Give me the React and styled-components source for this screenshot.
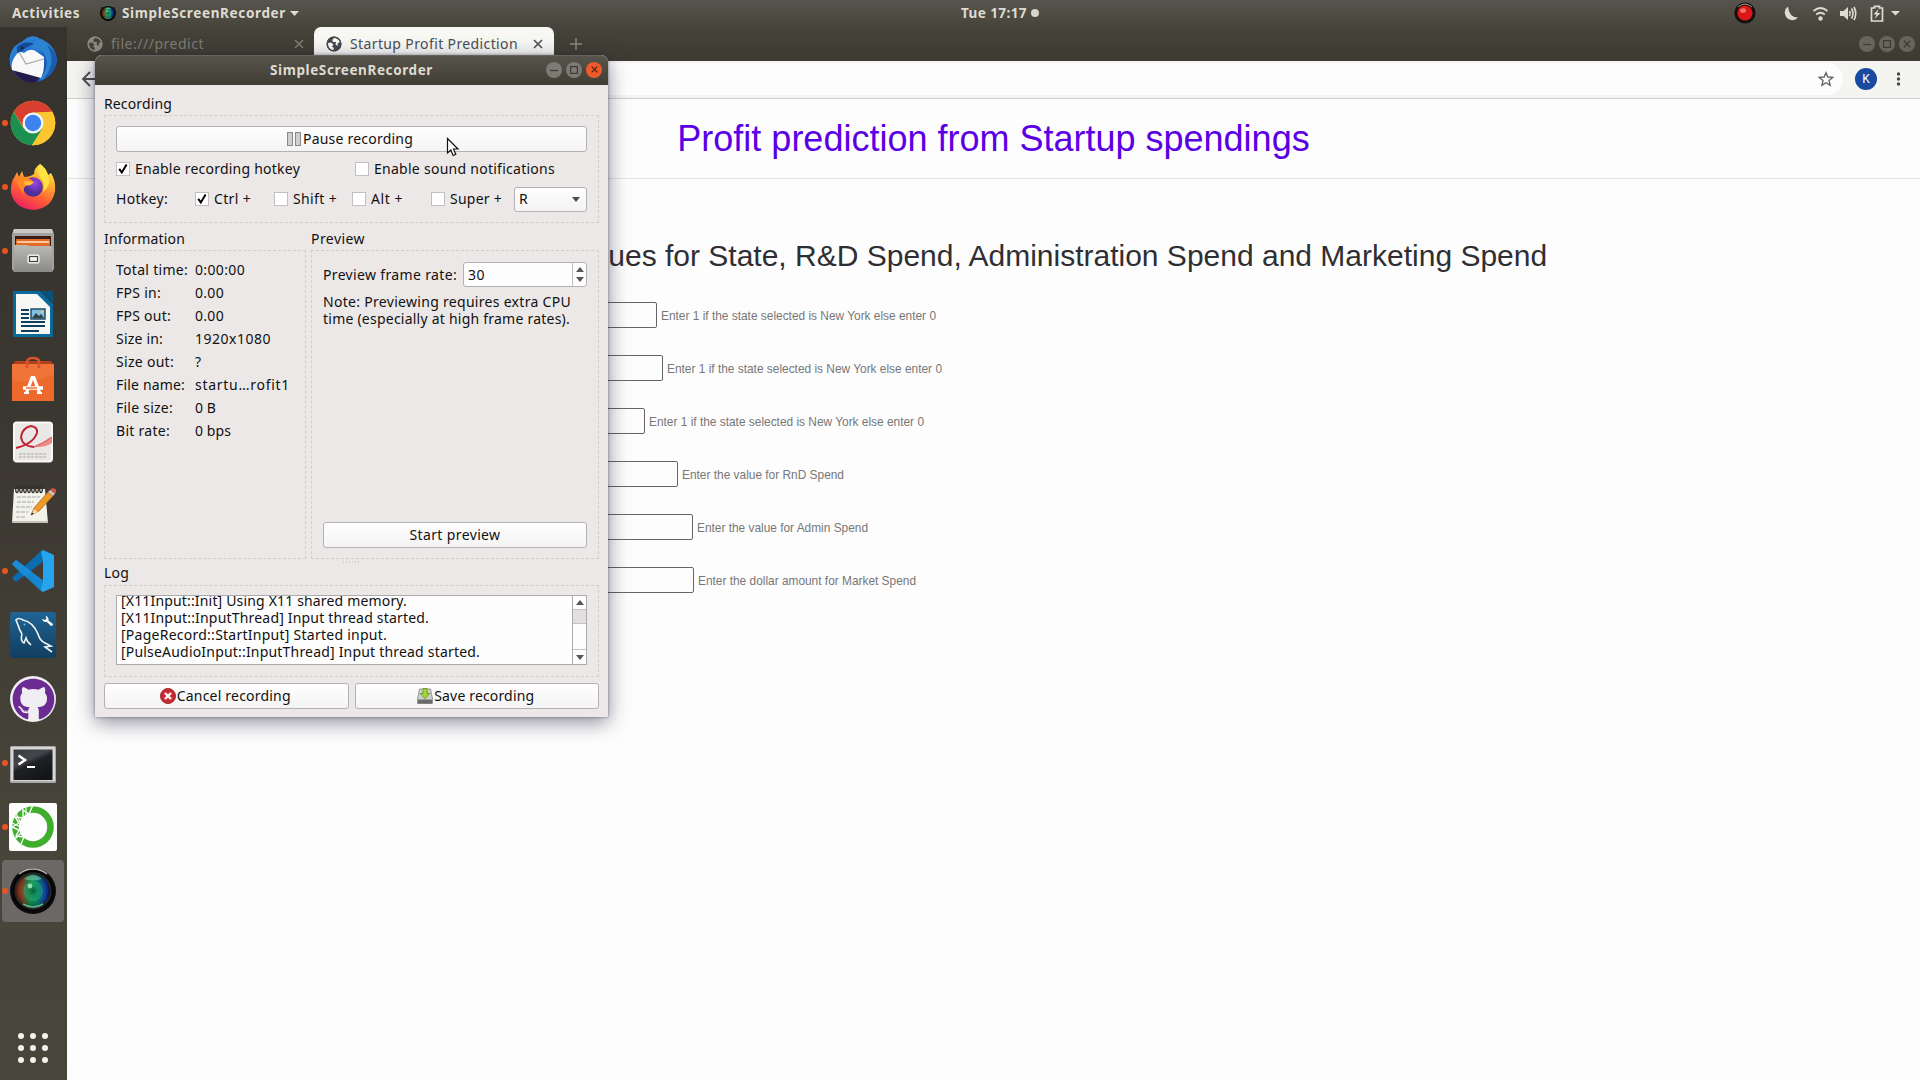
import React, { useLayoutEffect, useRef } from "react";
import styled, { createGlobalStyle, css } from "styled-components";
import { FaGithub } from "react-icons/fa";

const UI = `"Noto Sans", "Open Sans", sans-serif`;
const WEB = `"Liberation Sans", Arial, sans-serif`;

const GlobalStyle = createGlobalStyle`
  * { box-sizing: border-box; }
  body { margin: 0; background: #fdfdfd; overflow: hidden; }
  svg { display: block; flex: none; }
`;

/* ---------- text that tracks out to a given width ---------- */
const TextSpan = styled.span`
  display: inline-block;
  flex: none;
  white-space: pre;
  margin-left: ${(p) => p.$ml || 0}px;
`;
function Label({ w, ml, children }) {
  const ref = useRef(null);
  useLayoutEffect(() => {
    const el = ref.current;
    el.style.letterSpacing = "0px";
    const natural = el.getBoundingClientRect().width;
    el.style.letterSpacing = `${(w - natural) / el.textContent.length}px`;
  }, [w]);
  return <TextSpan ref={ref} $ml={ml}>{children}</TextSpan>;
}

/* ---------- shell ---------- */
const Desktop = styled.div`
  position: relative;
  width: 1920px;
  height: 1080px;
  display: flex;
  flex-direction: column;
  overflow: hidden;
  background: #fdfdfd;
  font-family: ${UI};
  font-size: 14px;
  line-height: 18px;
  color: #111;
`;
const TopBar = styled.header`
  height: 27px;
  flex: none;
  display: flex;
  align-items: center;
  padding: 0 0 1px 12px;
  background: linear-gradient(#56544c, #47453b);
  color: #dfdbd2;
  font-weight: 700;
  font-size: 13.5px;
`;
const AppMenu = styled.div`
  display: flex;
  align-items: center;
  margin-left: 20px;
  width: 848px;
`;
const Clock = styled.div`
  display: flex;
  align-items: center;
  gap: 4px;
  margin-left: 13px;
`;
const ClockDot = styled.i`
  width: 8px;
  height: 8px;
  border-radius: 50%;
  background: #d8d5cd;
`;
const Tray = styled.div`
  display: flex;
  align-items: center;
  margin-left: auto;
  padding-right: 20px;
`;
const Body = styled.div`
  flex: 1;
  display: flex;
  min-height: 0;
`;

/* ---------- dock ---------- */
const Dock = styled.nav`
  width: 67px;
  flex: none;
  display: flex;
  flex-direction: column;
  background: linear-gradient(#36322d, #3a3630 35%, #47443a 75%, #48453b);
`;
const DockItem = styled.div`
  height: 64px;
  display: flex;
  align-items: center;
  padding-left: 2px;
`;
const DockTile = styled.div`
  width: 62px;
  height: 62px;
  border-radius: 4px;
  display: flex;
  align-items: center;
  background: ${(p) => (p.$on ? "#6b6865" : "transparent")};
`;
const RunDot = styled.i`
  width: 6px;
  height: 6px;
  border-radius: 50%;
  margin-right: 1px;
  background: ${(p) => (p.$run ? "#e95420" : "transparent")};
`;
const IconSlot = styled.span`
  width: 48px;
  display: flex;
  justify-content: center;
  padding: ${(p) => p.$pad || "0"};
`;
const AppsGrid = styled.div`
  margin: auto 0 17px 18px;
  display: grid;
  grid-template-columns: repeat(3, 6px);
  gap: 6px;
`;
const AppsDot = styled.i`
  width: 6px;
  height: 6px;
  border-radius: 50%;
  background: #f3f2ee;
`;

/* ---------- browser ---------- */
const Browser = styled.main`
  flex: 1;
  min-width: 0;
  display: flex;
  flex-direction: column;
`;
const TabStrip = styled.div`
  height: 34px;
  flex: none;
  display: flex;
  background: linear-gradient(#46443a, #3d3b31);
  font-size: 14px;
`;
const Tab = styled.div`
  height: 34px;
  width: ${(p) => p.$w}px;
  padding: 0 ${(p) => (p.$active ? 11 : 10)}px 0 ${(p) => (p.$active ? 12 : 20)}px;
  display: flex;
  align-items: center;
  border-radius: 7px 7px 0 0;
  color: ${(p) => (p.$active ? "#4b4d51" : "#7f7d75")};
  ${(p) => p.$active && css`background: #f7f7f4;`}
`;
const TabClose = styled.span`
  margin-left: auto;
`;
const NewTab = styled.div`
  width: 44px;
  display: flex;
  align-items: center;
  justify-content: center;
`;
const WindowButtons = styled.div`
  display: flex;
  align-items: center;
  gap: 4px;
  margin-left: auto;
  padding-right: ${(p) => p.$pr}px;
`;
const RoundButton = styled.span`
  width: 16px;
  height: 16px;
  border-radius: 50%;
  display: flex;
  align-items: center;
  justify-content: center;
  background: ${(p) => p.$bg};
  color: ${(p) => p.$fg};
`;
const Toolbar = styled.div`
  height: 38px;
  flex: none;
  display: flex;
  align-items: center;
  padding: 0 0 2px 14px;
  border-bottom: 1px solid #cfcfcf;
  background: #f4f4f1;
`;
const Omnibox = styled.div`
  width: 1680px;
  height: 32px;
  flex: none;
  margin-left: 66px;
  border-radius: 16px;
  background: #fdfdfd;
  display: flex;
  align-items: center;
  justify-content: flex-end;
  padding-right: 9px;
`;
const Avatar = styled.div`
  width: 22px;
  height: 22px;
  margin-left: 12px;
  flex: none;
  border-radius: 50%;
  background: #1a49a0;
  color: #fff;
  font: 12px/22px Roboto, sans-serif;
  text-align: center;
`;
const PageHeader = styled.div`
  height: 80px;
  flex: none;
  border-bottom: 1px solid #e5e5e5;
  text-align: center;
  font: 36px/80px ${WEB};
  color: #5a00e6;
`;
const PageTitle = styled.h1`
  margin: 0;
  font: inherit;
`;
const Lead = styled.h2`
  margin: 60px 0 0;
  text-align: center;
  font: 30px/33px ${WEB};
  color: #2f2f33;
`;
const Form = styled.form`
  display: flex;
  flex-direction: column;
  gap: 27px;
  margin: 30px 0 0 373px;
`;
const Field = styled.div`
  display: flex;
  align-items: center;
  gap: 4px;
  height: 26px;
  font: 11.9px/17px ${WEB};
  color: #777;
`;
const Hint = styled.span`
  padding-top: 2px;
`;
const Input = styled.div`
  width: ${(p) => p.$w}px;
  height: 26px;
  border: 1px solid #66646b;
  border-radius: 2px;
  background: #fdfdfd;
`;

/* ---------- recorder window ---------- */
const Window = styled.section`
  position: absolute;
  left: 95px;
  top: 55px;
  width: 513px;
  height: 662px;
  display: flex;
  flex-direction: column;
  border-radius: 7px 7px 0 0;
  background: #ece8e7;
  box-shadow: 0 5px 20px rgba(30, 28, 60, 0.52), 0 0 3px rgba(40, 38, 60, 0.5);
`;
const TitleBar = styled.div`
  height: 30px;
  flex: none;
  display: flex;
  align-items: center;
  padding: 0 0 2px 175px;
  border-radius: 7px 7px 0 0;
  background: linear-gradient(#56544b, #3f3d34);
  border-top: 1px solid #66645b;
  color: #dfdbd2;
  font-weight: 700;
  font-size: 13.5px;
`;
const Content = styled.div`
  flex: 1;
  padding: 10px 9px 9px;
  display: flex;
  flex-direction: column;
`;
const GroupTitle = styled.div`
  height: ${(p) => p.$h}px;
  line-height: 18px;
`;
const Group = styled.div`
  border: 1px dashed #d2cecf;
  display: flex;
  flex-direction: column;
  height: ${(p) => p.$h}px;
  padding: ${(p) => p.$pad};
`;
const Button = styled.div`
  height: 26px;
  flex: ${(p) => (p.$grow ? 1 : "none")};
  display: flex;
  align-items: center;
  justify-content: center;
  gap: 1px;
  padding-right: ${(p) => p.$pr || 0}px;
  border: 1px solid #b5b1b3;
  border-radius: 3px;
  background: linear-gradient(#fefefe, #f5f4f4);
`;
const Line = styled.div`
  display: flex;
  align-items: center;
  height: ${(p) => p.$h}px;
  margin-top: ${(p) => p.$mt || 0}px;
`;
const Box = styled.span`
  width: 14px;
  height: 14px;
  flex: none;
  border: 1px solid #c4c0c2;
  background: #fff;
  display: flex;
  align-items: center;
  justify-content: center;
`;
const Check = styled.div`
  display: flex;
  align-items: center;
  width: ${(p) => p.$w}px;
  gap: 5px;
`;
const HotkeyTitle = styled.div`
  width: 79px;
`;
const Combo = styled.div`
  width: 73px;
  height: 25px;
  margin-left: auto;
  padding: 0 6px 0 4px;
  display: flex;
  align-items: center;
  justify-content: space-between;
  border: 1px solid #b5b1b3;
  border-radius: 3px;
  background: linear-gradient(#fefefe, #f5f4f4);
`;
const Split = styled.div`
  display: flex;
  gap: 5px;
  margin-top: 7px;
`;
const Column = styled.div`
  width: ${(p) => p.$w}px;
`;
const InfoRow = styled.div`
  height: 23px;
  display: grid;
  grid-template-columns: 79px 1fr;
  align-items: center;
`;
const Spin = styled.div`
  width: 124px;
  height: 25px;
  margin-left: auto;
  padding-left: 4px;
  border: 1px solid #b5b1b3;
  border-radius: 3px;
  background: #fdfdfd;
  display: flex;
  align-items: center;
`;
const SpinArrows = styled.div`
  width: 14px;
  height: 23px;
  margin-left: auto;
  border-left: 1px solid #c4c0c2;
  display: flex;
  flex-direction: column;
  align-items: center;
  justify-content: space-evenly;
`;
const Note = styled.div`
  margin: 6px 0 9px;
  height: 220px;
  display: flex;
  flex-direction: column;
  line-height: 17px;
`;
const LogView = styled.div`
  height: 70px;
  border: 1px solid #aeaaac;
  background: #fdfdfd;
  display: flex;
  overflow: hidden;
`;
const LogLines = styled.div`
  flex: 1;
  display: flex;
  flex-direction: column;
  padding-left: 4px;
  margin-top: -4px;
  line-height: 17px;
`;
const Scroll = styled.div`
  width: 14px;
  display: flex;
  flex-direction: column;
  border-left: 1px solid #aeaaac;
`;
const ScrollPart = styled.div`
  height: ${(p) => p.$h}px;
  display: flex;
  align-items: center;
  justify-content: center;
  background: ${(p) => p.$bg || "#fdfdfd"};
  border-bottom: ${(p) => (p.$line ? "1px solid #c3c0c6" : "0")};
`;
const Actions = styled.div`
  display: flex;
  gap: 6px;
  margin-top: 6px;
`;
const Grip = styled.div`
  height: 5px;
  display: flex;
  justify-content: center;
  align-items: center;
`;
const Pointer = styled.div`
  position: absolute;
  left: 446px;
  top: 137px;
`;

/* ---------- small glyphs ---------- */
const Tri = ({ w = 8, h = 5, up, c = "currentColor" }) => (
  <svg width={w} height={h} viewBox="0 0 10 6" preserveAspectRatio="none">
    <path d={up ? "M0 6L5 0L10 6Z" : "M0 0L5 6L10 0Z"} fill={c} />
  </svg>
);
const Cross = ({ s = 10, sw = 1.6 }) => (
  <svg width={s} height={s} viewBox="0 0 10 10">
    <path d="M1 1L9 9M9 1L1 9" stroke="currentColor" strokeWidth={sw} fill="none" />
  </svg>
);
const Tick = () => (
  <svg width="12" height="12" viewBox="0 0 12 12">
    <path d="M2.2 5.8L4.8 9.4L9.6 1.6" fill="none" stroke="#000" strokeWidth="2" />
  </svg>
);
const MinGlyph = () => (
  <svg width="8" height="8" viewBox="0 0 8 8"><path d="M0 4.5H8" stroke="currentColor" strokeWidth="1.2" /></svg>
);
const MaxGlyph = () => (
  <svg width="8" height="8" viewBox="0 0 8 8"><rect x=".6" y=".6" width="6.8" height="6.8" fill="none" stroke="currentColor" strokeWidth="1.2" /></svg>
);
const Globe = ({ fg, land }) => (
  <svg width="16" height="16" viewBox="0 0 16 16">
    <circle cx="8" cy="8" r="7.4" fill={fg} />
    <path d="M2 7L5 6.500L7.500 8.500L6 10.500L8 12L7 14.600Q1.800 13 2 7Z" fill={land} />
    <path d="M8 2Q12 1.600 14 6L11.500 7.500L12 10L9.500 8.500L10 6L7 6L6.200 4Z" fill={land} />
    <circle cx="8" cy="8" r="6.900" fill="none" stroke={fg} strokeWidth="1.300" />
  </svg>
);

const LensIcon = ({ size, id }) => (
  <svg width={size} height={size} viewBox="0 0 46 46">
    <defs>
      <linearGradient id={id + "a"} x1="0" x2="1"><stop offset="0" stopColor="#c8260e" /><stop offset=".16" stopColor="#a03a18" /><stop offset=".42" stopColor="#128a48" /><stop offset=".62" stopColor="#0a8068" /><stop offset=".9" stopColor="#1030c4" /><stop offset="1" stopColor="#101c70" /></linearGradient>
      <radialGradient id={id + "b"}><stop offset="0" stopColor="#04502c" stopOpacity=".8" /><stop offset=".4" stopColor="#1fae70" stopOpacity=".5" /><stop offset=".7" stopColor="#0a7050" stopOpacity=".25" /><stop offset="1" stopColor="#000" stopOpacity=".4" /></radialGradient>
    </defs>
    <circle cx="23" cy="23" r="23" fill="#0b0b0b" />
    <path d="M9 6A22 22 0 0 1 37 6" fill="none" stroke="#b5b5b0" strokeWidth="1.6" />
    <circle cx="23" cy="23" r="19.5" fill="#252524" stroke="#000" strokeWidth="1.5" />
    <circle cx="23" cy="23" r="16.500" fill={`url(#${id}a)`} />
    <circle cx="23" cy="23" r="16.500" fill={`url(#${id}b)`} />
    <path d="M14 11Q23 3 32 11Q23 14 14 11Z" fill="#8fe0c0" opacity=".5" />
    <path d="M13 36Q23 42 33 36" fill="none" stroke="#6fd0a0" strokeWidth="1.5" opacity=".8" />
    <circle cx="23" cy="23" r="9" fill="none" stroke="#43cf8b" strokeWidth="1" opacity=".4" />
    <circle cx="20" cy="18" r="2.4" fill="#a5f0c8" opacity=".8" />
  </svg>
);

const icons = {
  thunderbird: (
    <svg width="48" height="48" viewBox="0 0 48 48">
      <defs><linearGradient id="tb" x1="0" y1="0" x2="1" y2="1"><stop offset="0" stopColor="#2f8fe0" /><stop offset=".55" stopColor="#1f66c4" /><stop offset="1" stopColor="#20337c" /></linearGradient></defs>
      <path d="M14 6Q22-2 32 4Q46 10 48 25Q47 40 32 46Q16 50 7 40Q-1 32 1 20Q4 10 14 6Z" fill="url(#tb)" />
      <path d="M14 6Q22-1 30 3Q24 8 22 13L34 17Q40 26 36 36L30 46Q44 42 48 25Q46 10 32 4Z" fill="#2b83d2" />
      <path d="M38 10Q46 22 40 36L34 45Q46 38 48 25Q46 14 38 10Z" fill="#1c5cae" />
      <path d="M8 12Q15 5 25 9Q15 12 8 22Z" fill="#174a96" />
      <path d="M4 36Q14 50 27 47L34 38Z" fill="#231a4c" />
      <path d="M7 20Q10 15 15 18Q22 12 28 17L35 22V31Q35 37 32 43L3 35Q1 28 7 20Z" fill="#f8f8f8" />
      <path d="M10 17L17 29L35 24" fill="none" stroke="#a8a8a2" strokeWidth="1.2" />
      <circle cx="13" cy="13" r="1.6" fill="#102a55" />
    </svg>
  ),
  chrome: (
    <svg width="46" height="46" viewBox="0 0 46 46">
      <circle cx="23" cy="23" r="22.3" fill="#fbc62f" />
      <path d="M3.7 11.8A22.3 22.3 0 0 1 42.3 11.8L23 12.5L14 28Z" fill="#d93f30" />
      <path d="M3.7 11.8A22.3 22.3 0 0 0 22 45.3L32.5 28.5L13.5 28.5Z" fill="#1a9150" />
      <path d="M42.3 11.8A22.3 22.3 0 0 1 22 45.3L32.5 28.5L30 12.4Z" fill="#fbc62f" />
      <circle cx="23" cy="23" r="10.5" fill="#f4f6f4" />
      <circle cx="23" cy="23" r="8.2" fill="#3e82ee" />
    </svg>
  ),
  firefox: (
    <svg width="46" height="48" viewBox="0 0 46 48">
      <defs>
        <linearGradient id="ff" x1=".8" y1="0" x2=".3" y2="1"><stop offset="0" stopColor="#fff04a" /><stop offset=".35" stopColor="#ffab2e" /><stop offset=".65" stopColor="#ff5f35" /><stop offset="1" stopColor="#ee1f62" /></linearGradient>
        <radialGradient id="fp" cx=".6" cy=".3"><stop offset="0" stopColor="#a045e8" /><stop offset="1" stopColor="#503098" /></radialGradient>
      </defs>
      <path d="M30 1Q36 5 38 12L41 10Q46 18 45 28Q42 45 24 47Q5 46 1 30Q0 20 5 13L7 9L9 14L12 8L14 14Q20 14 24 11Q24 5 30 1Z" fill="url(#ff)" />
      <circle cx="23" cy="24" r="9.8" fill="url(#fp)" />
      <path d="M8 14Q15 12 23 18Q22 21 17 22Q12 25 14 31Q6 24 8 14Z" fill="#ff8a24" />
      <path d="M14 18Q20 18 24 19Q20 24 15 22Z" fill="#ffbd3a" />
      <path d="M30 1Q26 9 30 14Q36 20 33 29Q42 22 38 12Q36 5 30 1Z" fill="#ffe245" />
    </svg>
  ),
  files: (
    <svg width="46" height="46" viewBox="0 0 46 46">
      <defs><linearGradient id="fl" x1="0" y1="0" x2="0" y2="1"><stop offset="0" stopColor="#b9b9b5" /><stop offset="1" stopColor="#8a8a88" /></linearGradient></defs>
      <path d="M4 2H42L44 7V42L42 45H4L2 42V7Z" fill="#a2a2a0" />
      <path d="M4 2H42L43 6H3Z" fill="#c8c8c5" />
      <rect x="5" y="9" width="36" height="11" fill="#3a1c12" />
      <rect x="6" y="12" width="34" height="8" fill="#e26a25" /><rect x="7" y="14" width="32" height="2" fill="#f7c99c" />
      <path d="M4 18H17L20 19H42V45H4Z" fill="url(#fl)" />
      <rect x="18" y="28" width="11" height="8" rx="1" fill="#eee" stroke="#fff" strokeWidth="1" /><rect x="19.5" y="29.5" width="8" height="5" fill="#f4f4ee" stroke="#42423c" strokeWidth="1.2" />
    </svg>
  ),
  writer: (
    <svg width="46" height="48" viewBox="0 0 46 48">
      <path d="M3 1H30L43 14V47H3Z" fill="#096a9a" />
      <path d="M31 1H43V13Z" fill="#08527d" />
      <path d="M6 4H27L40 17V44H6Z" fill="#f7f8f6" />
      <path d="M11 20H19M11 24H19M11 28H19M11 32H35M11 36H35M11 41H29" stroke="#0f3d5c" strokeWidth="2" />
      <rect x="21" y="19" width="14" height="10" fill="#7fc0e8" stroke="#18425c" strokeWidth="1.4" />
      <path d="M22 28L26 23L29 26L31 24L34 28Z" fill="#33423b" /><circle cx="32" cy="21.7" r="1.3" fill="#f2cc3d" />
    </svg>
  ),
  software: (
    <svg width="46" height="46" viewBox="0 0 46 46">
      <path d="M2 10L5 5H41L44 10Z" fill="#b3401c" />
      <rect x="2" y="8" width="42" height="37" fill="#ee6a2c" />
      <path d="M2 8H44V18Q24 28 2 24Z" fill="#f27e42" opacity=".5" />
      <path d="M17 12V6Q17 2 23 2Q29 2 29 6V12" fill="none" stroke="#d8532a" strokeWidth="2.6" />
      <path d="M21 20H25L31 36H27.5L23 24L18.5 36H15Z" fill="#fff" />
      <path d="M13 32H33" stroke="#fff" strokeWidth="3.4" /><path d="M16 32H27" stroke="#ee6a2c" strokeWidth="1.4" />
      <path d="M14 37H19M27 37H32" stroke="#fff" strokeWidth="2" />
    </svg>
  ),
  pdf: (
    <svg width="46" height="46" viewBox="0 0 46 46">
      <rect x="3" y="2.500" width="40" height="41" rx="4" fill="#f9f8f8" />
      <rect x="5" y="4.500" width="36" height="37" rx="2" fill="#eae7e7" />
      <path d="M26 27Q35 22 42 18V24Q31 31 19 26Q24 29 26 27Z" fill="#ef8b86" />
      <path d="M6 29Q23 25 27 14Q28 8 21 7Q12 9 11 18Q12 27 24 28" fill="none" stroke="#c02330" strokeWidth="2" />
      <path d="M24 28Q34 24 42 18" fill="none" stroke="#dc6b68" strokeWidth="1.400" />
      <path d="M9 35H37M9 38H37" stroke="#aaa9a0" strokeWidth="1" strokeDasharray="3 1" />
    </svg>
  ),
  notes: (
    <svg width="46" height="42" viewBox="0 0 46 42">
      <path d="M4 6H35L38 40H2Z" fill="#f3f2e8" /><path d="M2 38H38V40H2Z" fill="#c4c3b8" />
      <g fill="none" stroke="#33322d" strokeWidth="1.3">{[7, 11, 15, 19, 23, 27, 31].map((x) => <ellipse key={x} cx={x} cy="6.5" rx="1.3" ry="3" />)}</g>
      <path d="M7 14H30M7 19H24M6 24H22M6 29H18M6 34H15" stroke="#a9a8b4" strokeWidth="1.2" strokeDasharray="4 1" />
      <path d="M21 32L24 25L38 9L43 13L29 28Z" fill="#f09a2a" stroke="#a7611a" strokeWidth=".8" />
      <path d="M21 32L24 26L28 29Z" fill="#f5d9a6" /><path d="M21 32L22 29.5L23.7 30.8Z" fill="#111" />
      <path d="M38 9L40 7L45 10.5L43 13Z" fill="#c8c8c4" /><path d="M40 7Q42 4 45 6Q48 8 45 10.5Z" fill="#e05050" />
    </svg>
  ),
  vscode: (
    <svg width="46" height="46" viewBox="0 0 46 46">
      <path d="M6 12L2 16L32 44L34 33Z" fill="#1587d0" />
      <path d="M2 30L6 34L34 13L32 2Z" fill="#0b6cb0" />
      <path d="M2 16L6 12L22 24L14 28Z" fill="#1a8cd6" />
      <path d="M33 2L44 7V39L33 44L31 42L33 33V13L31 4Z" fill="#26a4ee" />
    </svg>
  ),
  mysql: (
    <svg width="46" height="46" viewBox="0 0 46 46">
      <defs><linearGradient id="my" x1="0" y1="0" x2="0" y2="1"><stop offset="0" stopColor="#1f6494" /><stop offset="1" stopColor="#123d60" /></linearGradient></defs>
      <rect width="46" height="46" rx="3" fill="url(#my)" />
      <path d="M12 22Q9 17 8 13L6 8Q8 5 13 8Q23 10 28 22Q30 29 35 31L41 34L35 35L42 40M12 22Q10 29 14 31L16 26Q17 30 21 33" fill="none" stroke="#f0f5f8" strokeWidth="1.6" />
      <circle cx="14.5" cy="12.5" r="1" fill="#6cc0ef" />
      <path d="M35.500 3.500Q39 5 38.500 8.500L43 12Q43 14 41 14L37 10Q33 10.500 32 7L35 8L36.500 6.500Z" fill="#fff" />
    </svg>
  ),
  terminal: (
    <svg width="46" height="38" viewBox="0 0 46 38">
      <defs><linearGradient id="te" x1="0" y1="0" x2=".6" y2="1"><stop offset="0" stopColor="#3a3b40" /><stop offset=".4" stopColor="#44464c" /><stop offset=".55" stopColor="#202124" /><stop offset="1" stopColor="#141517" /></linearGradient></defs>
      <rect width="46" height="37" rx="1.5" fill="#a9a9ad" /><rect x="1" y="1" width="44" height="34" fill="#d6d6d9" />
      <rect x="3.500" y="3.500" width="39" height="30.500" fill="url(#te)" />
      <path d="M8.500 9.500L15 14L8.500 18.500" fill="none" stroke="#fff" strokeWidth="2.500" /><path d="M17 21H25" stroke="#fff" strokeWidth="2" />
    </svg>
  ),
  anaconda: (
    <svg width="48" height="48" viewBox="0 0 48 48">
      <rect width="48" height="48" rx="2" fill="#fdfdfd" />
      <circle cx="24" cy="24" r="17.500" fill="none" stroke="#3fae2c" strokeWidth="6.600" />
      <path d="M12 41L15 34L7 33L10 27L3 24L10 20L6 14L14 15L14 7L20 11L24 2" fill="none" stroke="#fdfdfd" strokeWidth="1.400" />
      <path d="M5 37L12 30M3 20L12 24M7 10L11 19M17 4L17 14" fill="none" stroke="#fdfdfd" strokeWidth="1.100" />
    </svg>
  ),
};

const OctoWrap = styled.span`
  width: 46px;
  height: 46px;
  border-radius: 50%;
  background: #f0eef2;
  display: flex;
  align-items: center;
  justify-content: center;
  color: #6c2a94;
`;

const dock = [
  ["thunderbird", 0], ["chrome", 1], ["firefox", 1], ["files", 1, "0 0 2px"], ["writer", 0, "0 0 2px"], ["software", 0, "0 0 1px"], ["pdf", 0, "0 0 2px"],
  ["notes", 0, "0 0 6px"], ["vscode", 1], ["mysql", 0], ["github", 0], ["terminal", 1, "3px 0 0"], ["anaconda", 1], ["lens", 1],
];
const dockIcon = (n) =>
  n === "github" ? <OctoWrap><FaGithub size={43} /></OctoWrap> : n === "lens" ? <LensIcon size={46} id="dk" /> : icons[n];

const fields = [
  [217, "Enter 1 if the state selected is New York else enter 0", 275],
  [223, "Enter 1 if the state selected is New York else enter 0", 275],
  [205, "Enter 1 if the state selected is New York else enter 0", 275],
  [238, "Enter the value for RnD Spend", 162],
  [253, "Enter the value for Admin Spend", 171],
  [254, "Enter the dollar amount for Market Spend", 218],
];
const info = [
  ["Total time:", 72, "0:00:00", 50], ["FPS in:", 45, "0.00", 29], ["FPS out:", 55, "0.00", 29], ["Size in:", 47, "1920x1080", 76],
  ["Size out:", 58, "?", 6], ["File name:", 69, "startu…rofit1", 95], ["File size:", 57, "0 B", 21], ["Bit rate:", 54, "0 bps", 36],
];
const log = [
  ["[X11Input::Init] Using X11 shared memory.", 286],
  ["[X11Input::InputThread] Input thread started.", 308],
  ["[PageRecord::StartInput] Started input.", 266],
  ["[PulseAudioInput::InputThread] Input thread started.", 359],
];
const hotkeys = [["Ctrl +", 37, 79, 1], ["Shift +", 44, 78, 0], ["Alt +", 32, 79, 0], ["Super +", 52, 80, 0]];

export default function App() {
  return (
    <Desktop>
      <GlobalStyle />
      <TopBar>
        <Label w={68}>Activities</Label>
        <AppMenu>
          <LensIcon size={16} id="tp" />
          <Label w={164} ml={6}>SimpleScreenRecorder</Label>
          <TextSpan $ml={4}><Tri w={9} h={5} /></TextSpan>
        </AppMenu>
        <Clock><Label w={66}>Tue 17:17</Label><ClockDot /></Clock>
        <Tray>
          <svg width="22" height="22" viewBox="0 0 22 22">
            <circle cx="11" cy="11" r="10.600" fill="#141210" /><circle cx="11" cy="11" r="7.600" fill="#dc1717" />
            <path d="M4 5Q11-1 18 5" fill="none" stroke="#a09c95" /><ellipse cx="9" cy="8.500" rx="3" ry="2.300" fill="#ff9088" opacity=".75" />
          </svg>
          <svg width="144" height="20" viewBox="0 0 144 20">
            <g fill="#dfdbd2">
              <path d="M31 4A7.500 7.500 0 1 0 41 15Q32 15 31 4Z" transform="translate(1 -.5)" />
              <circle cx="64.500" cy="15.500" r="2.200" />
              <path d="M84 8H87.500L92 4V17L87.500 13H84Z" />
              <path d="M122.500 6L117.500 11.500H120.500L118.500 16L124.500 10H121.300Z" />
              <path d="M139 8H148L143.500 12.500Z" transform="translate(-4 0)" />
            </g>
            <g fill="none" stroke="#dfdbd2" strokeWidth="1.700">
              <path d="M57.500 8Q64.500 2 71.500 8M60.200 11.500Q64.500 8 68.800 11.500" />
              <path d="M93.500 8Q95 10.500 93.500 13M95.500 5.500Q98.500 10.500 95.500 15.500M98 4Q101.500 10.500 98 17" />
              <path d="M115.500 5H118.500V3.300H123.500V5H126.500V18H115.500Z" />
            </g>
          </svg>
        </Tray>
      </TopBar>

      <Body>
        <Dock>
          {dock.map(([n, run, pad]) => (
            <DockItem key={n}>
              <DockTile $on={n === "lens"}>
                <RunDot $run={run} />
                <IconSlot $pad={pad}>{dockIcon(n)}</IconSlot>
              </DockTile>
            </DockItem>
          ))}
          <AppsGrid>{[...Array(9)].map((_, i) => <AppsDot key={i} />)}</AppsGrid>
        </Dock>

        <Browser>
          <TabStrip>
            <Tab $w={247}>
              <Globe fg="#8d8b84" land="#45433a" />
              <Label w={93} ml={8}>file:///predict</Label>
              <TabClose><Cross /></TabClose>
            </Tab>
            <Tab $w={240} $active>
              <Globe fg="#45484c" land="#f7f7f4" />
              <Label w={168} ml={8}>Startup Profit Prediction</Label>
              <TabClose><Cross /></TabClose>
            </Tab>
            <NewTab>
              <svg width="12" height="12" viewBox="0 0 12 12"><path d="M6 0V12M0 6H12" stroke="#8b8982" strokeWidth="1.500" /></svg>
            </NewTab>
            <WindowButtons $pr={5}>
              <RoundButton $bg="#67655c" $fg="#3d3b33"><MinGlyph /></RoundButton>
              <RoundButton $bg="#67655c" $fg="#3d3b33"><MaxGlyph /></RoundButton>
              <RoundButton $bg="#67655c" $fg="#3d3b33"><Cross s={8} /></RoundButton>
            </WindowButtons>
          </TabStrip>
          <Toolbar>
            <svg width="16" height="16" viewBox="0 0 16 16"><path d="M16 8H2M9 1L2 8L9 15" fill="none" stroke="#4c4e50" strokeWidth="1.900" /></svg>
            <Omnibox>
              <svg width="16" height="16" viewBox="0 0 24 24"><path d="M12 2.500L14.800 9L22 9.600L16.500 14.300L18.200 21.500L12 17.600L5.800 21.500L7.500 14.300L2 9.600L9.200 9Z" fill="none" stroke="#5f6368" strokeWidth="2" /></svg>
            </Omnibox>
            <Avatar>K</Avatar>
            <svg width="43" height="16" viewBox="0 0 43 16"><g fill="#46484b"><circle cx="21.500" cy="3" r="1.700" /><circle cx="21.500" cy="8" r="1.700" /><circle cx="21.500" cy="13" r="1.700" /></g></svg>
          </Toolbar>
          <PageHeader><PageTitle>Profit prediction from Startup spendings</PageTitle></PageHeader>
          <Lead>Enter the values for State, R&amp;D Spend, Administration Spend and Marketing Spend</Lead>
          <Form>
            {fields.map(([w, t, tw], i) => (
              <Field key={i}><Input $w={w} /><Hint><Label w={tw}>{t}</Label></Hint></Field>
            ))}
          </Form>
        </Browser>
      </Body>

      <Window>
        <TitleBar>
          <Label w={163}>SimpleScreenRecorder</Label>
          <WindowButtons $pr={6}>
            <RoundButton $bg="#7d7a73" $fg="#3b3932"><MinGlyph /></RoundButton>
            <RoundButton $bg="#7d7a73" $fg="#3b3932"><MaxGlyph /></RoundButton>
            <RoundButton $bg="#ee5a2b" $fg="#4a2010"><Cross s={7} /></RoundButton>
          </WindowButtons>
        </TitleBar>
        <Content>
          <GroupTitle $h={20}><Label w={68}>Recording</Label></GroupTitle>
          <Group $h={108} $pad="10px 11px">
            <Button $pr={3}>
              <svg width="15" height="16" viewBox="0 0 15 16"><g fill="#cfcfcf" stroke="#8a8a8a"><rect x=".5" y="1.500" width="5" height="13" /><rect x="8.500" y="1.500" width="5" height="13" /></g></svg>
              <Label w={110}>Pause recording</Label>
            </Button>
            <Line $h={18} $mt={8}>
              <Check $w={239}><Box><Tick /></Box><Label w={165}>Enable recording hotkey</Label></Check>
              <Check $w={200}><Box /><Label w={181}>Enable sound notifications</Label></Check>
            </Line>
            <Line $h={26} $mt={8}>
              <HotkeyTitle><Label w={52}>Hotkey:</Label></HotkeyTitle>
              {hotkeys.map(([t, w, cw, on]) => (
                <Check key={t} $w={cw}><Box>{on ? <Tick /> : null}</Box><Label w={w}>{t}</Label></Check>
              ))}
              <Combo>R<Tri w={8} h={5} c="#4c4c4c" /></Combo>
            </Line>
          </Group>

          <Split>
            <Column $w={202}>
              <GroupTitle $h={20}><Label w={81}>Information</Label></GroupTitle>
              <Group $h={309} $pad="7px 11px">
                {info.map(([a, aw, b, bw]) => (
                  <InfoRow key={a}><span><Label w={aw}>{a}</Label></span><span><Label w={bw}>{b}</Label></span></InfoRow>
                ))}
              </Group>
            </Column>
            <Column $w={288}>
              <GroupTitle $h={20}><Label w={54}>Preview</Label></GroupTitle>
              <Group $h={309} $pad="11px 11px 10px">
                <Line $h={25}>
                  <Label w={134}>Preview frame rate:</Label>
                  <Spin>
                    <Label w={17}>30</Label>
                    <SpinArrows><Tri up w={8} h={5} c="#555" /><Tri w={8} h={5} c="#555" /></SpinArrows>
                  </Spin>
                </Line>
                <Note>
                  <span><Label w={248}>Note: Previewing requires extra CPU</Label></span>
                  <span><Label w={247}>time (especially at high frame rates).</Label></span>
                </Note>
                <Button><Label w={91}>Start preview</Label></Button>
              </Group>
            </Column>
          </Split>
          <Grip><svg width="18" height="2"><path d="M0 1H18" stroke="#bbb7b8" strokeDasharray="1 2" /></svg></Grip>
          <GroupTitle $h={21}><Label w={25}>Log</Label></GroupTitle>
          <Group $h={92} $pad="9px 11px">
            <LogView>
              <LogLines>{log.map(([t, w]) => <span key={t}><Label w={w}>{t}</Label></span>)}</LogLines>
              <Scroll>
                <ScrollPart $h={14} $line><Tri up w={8} h={5} c="#555" /></ScrollPart>
                <ScrollPart $h={14} $bg="#e2dfdf" $line />
                <ScrollPart $h={26} $line />
                <ScrollPart $h={14}><Tri w={8} h={5} c="#555" /></ScrollPart>
              </Scroll>
            </LogView>
          </Group>
          <Actions>
            <Button $grow $pr={2}>
              <svg width="16" height="16" viewBox="0 0 16 16"><circle cx="8" cy="8" r="7.600" fill="#c92a31" stroke="#971c22" strokeWidth=".8" /><path d="M5 5L11 11M11 5L5 11" stroke="#fff" strokeWidth="2.400" /></svg>
              <Label w={114}>Cancel recording</Label>
            </Button>
            <Button $grow $pr={2}>
              <svg width="16" height="16" viewBox="0 0 16 16"><path d="M2.500 1H13.500L15.500 11V15.500H.5V11Z" fill="#cfcfcd" stroke="#858583" strokeWidth=".8" /><rect x="1" y="11.500" width="14" height="4" fill="#6a6a68" /><path d="M6 .5H10V5.500H12.800L8 10.800L3.200 5.500H6Z" fill="#a5d43c" stroke="#5e8f18" strokeWidth=".8" /></svg>
              <Label w={100}>Save recording</Label>
            </Button>
          </Actions>
        </Content>
      </Window>

      <Pointer>
        <svg width="14" height="20" viewBox="0 0 14 20"><path d="M1.500 1.500V16L4.800 13L7.200 18.500L9.800 17.300L7.500 12H12Z" fill="#fff" stroke="#111" strokeWidth="1.200" /></svg>
      </Pointer>
    </Desktop>
  );
}
